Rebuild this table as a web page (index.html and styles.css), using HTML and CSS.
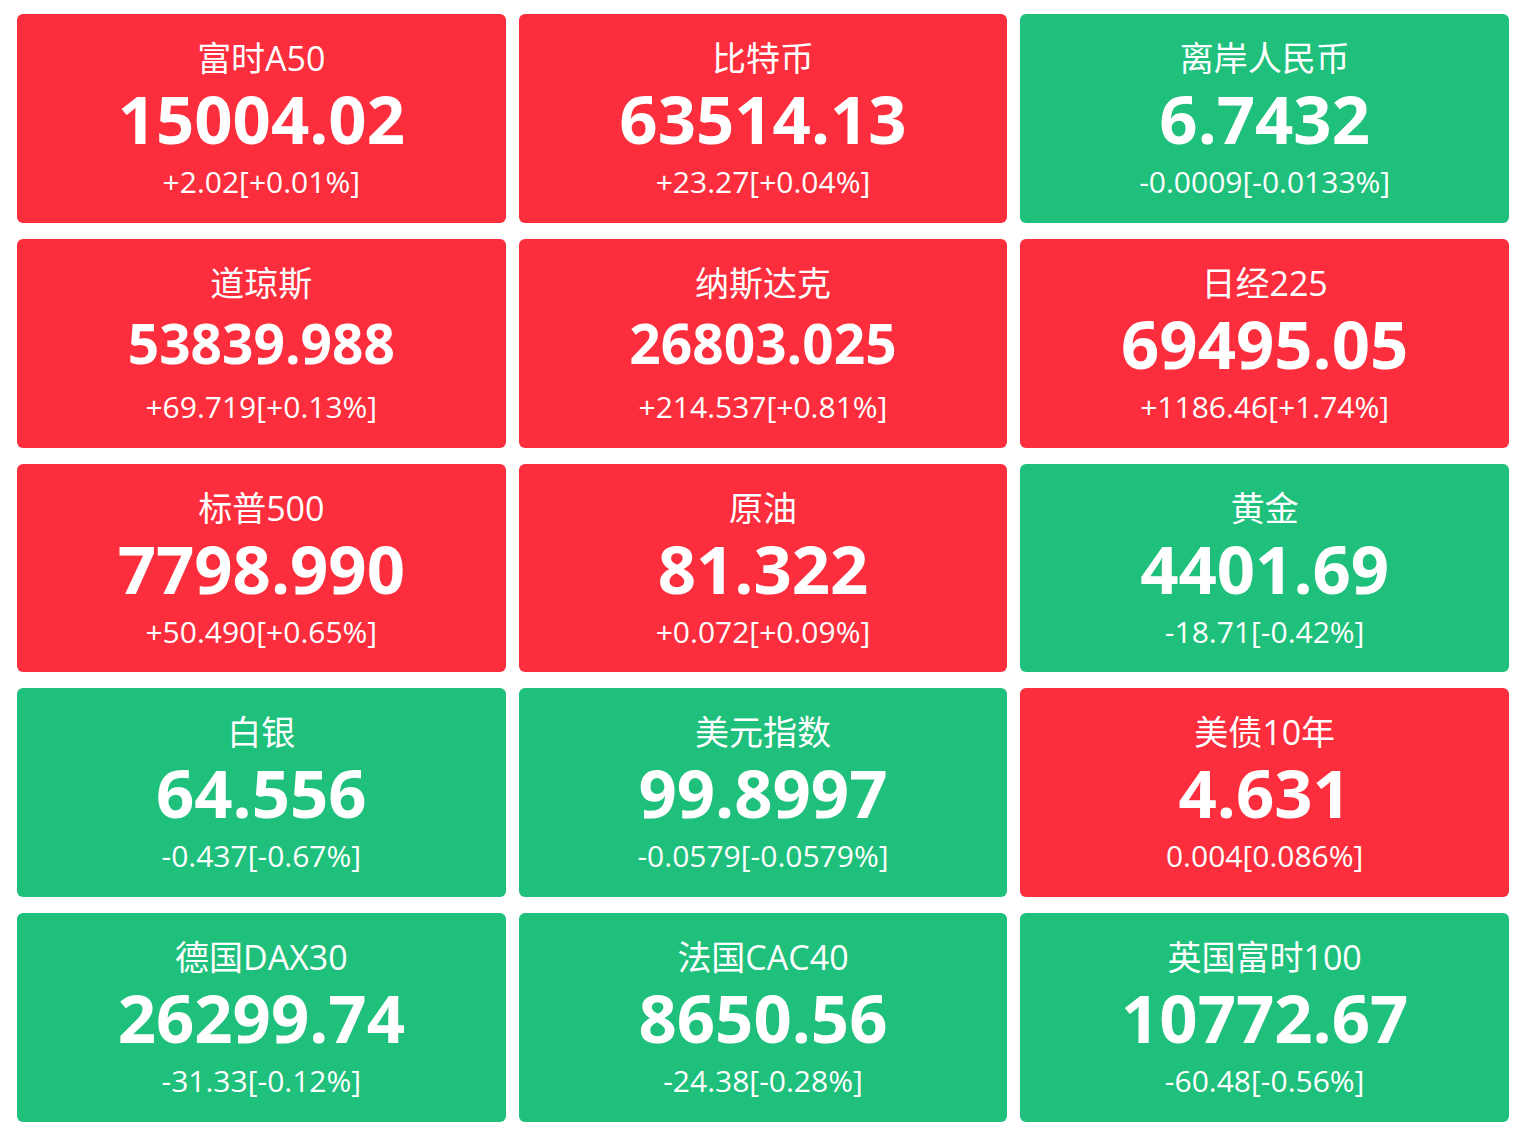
FILE: index.html
```html
<!DOCTYPE html>
<html lang="zh-CN">
<head>
<meta charset="utf-8">
<title>行情</title>
<link rel="stylesheet" href="styles.css">
</head>
<body>
<div class="board">
  <div class="card up"><div class="name">富时A50</div><div class="price">15004.02</div><div class="change">+2.02[+0.01%]</div></div>
  <div class="card up"><div class="name">比特币</div><div class="price">63514.13</div><div class="change">+23.27[+0.04%]</div></div>
  <div class="card down"><div class="name">离岸人民币</div><div class="price">6.7432</div><div class="change">-0.0009[-0.0133%]</div></div>

  <div class="card up"><div class="name">道琼斯</div><div class="price long">53839.988</div><div class="change">+69.719[+0.13%]</div></div>
  <div class="card up"><div class="name">纳斯达克</div><div class="price long">26803.025</div><div class="change">+214.537[+0.81%]</div></div>
  <div class="card up"><div class="name">日经225</div><div class="price">69495.05</div><div class="change">+1186.46[+1.74%]</div></div>

  <div class="card up"><div class="name">标普500</div><div class="price">7798.990</div><div class="change">+50.490[+0.65%]</div></div>
  <div class="card up"><div class="name">原油</div><div class="price">81.322</div><div class="change">+0.072[+0.09%]</div></div>
  <div class="card down"><div class="name">黄金</div><div class="price">4401.69</div><div class="change">-18.71[-0.42%]</div></div>

  <div class="card down"><div class="name">白银</div><div class="price">64.556</div><div class="change">-0.437[-0.67%]</div></div>
  <div class="card down"><div class="name">美元指数</div><div class="price">99.8997</div><div class="change">-0.0579[-0.0579%]</div></div>
  <div class="card up"><div class="name">美债10年</div><div class="price">4.631</div><div class="change">0.004[0.086%]</div></div>

  <div class="card down"><div class="name">德国DAX30</div><div class="price">26299.74</div><div class="change">-31.33[-0.12%]</div></div>
  <div class="card down"><div class="name">法国CAC40</div><div class="price">8650.56</div><div class="change">-24.38[-0.28%]</div></div>
  <div class="card down"><div class="name">英国富时100</div><div class="price">10772.67</div><div class="change">-60.48[-0.56%]</div></div>
</div>
</body>
</html>
```

FILE: styles.css
```css
html, body {
  margin: 0;
  padding: 0;
  background: #ffffff;
}

body {
  font-family: "Open Sans", "Noto Sans CJK SC", sans-serif;
  color: #ffffff;
}

.board {
  width: 1492px;
  padding: 14px 0 0 17px;
  display: grid;
  grid-template-columns: repeat(3, 1fr);
  grid-auto-rows: 208.75px;
  column-gap: 13px;
  row-gap: 16px;
}

.card {
  border-radius: 6px;
  padding-top: 24px;
  box-sizing: border-box;
  text-align: center;
  display: flex;
  flex-direction: column;
  align-items: center;
}

.card.up {
  background: #fc2e3d;
}

.card.down {
  background: #1ec07c;
}

.name {
  font-size: 34px;
  line-height: 40px;
  font-weight: 400;
  white-space: nowrap;
}

.price {
  font-size: 67px;
  line-height: 80px;
  font-weight: 700;
  white-space: nowrap;
}

.price.long {
  font-size: 55px;
}

.change {
  font-size: 30px;
  line-height: 48px;
  font-weight: 400;
  white-space: nowrap;
}
```
